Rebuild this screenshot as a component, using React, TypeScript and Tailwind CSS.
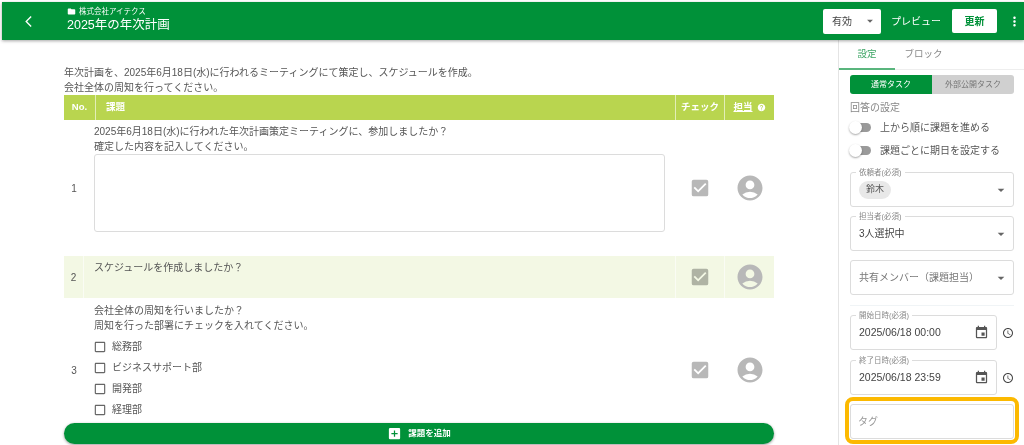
import React from 'react';
import {
  MdAccessTime,
  MdAccountCircle,
  MdAddBox,
  MdArrowDropDown,
  MdArrowBackIosNew,
  MdCheckBox,
  MdCheckBoxOutlineBlank,
  MdEvent,
  MdFolder,
  MdHelp,
  MdMoreVert,
} from 'react-icons/md';

const FONT = '"Liberation Sans", "Noto Sans CJK JP", sans-serif';

const DEPARTMENTS = ['総務部', 'ビジネスサポート部', '開発部', '経理部'];

const RowIcons = () => (
  <>
    <div className="w-[49px] flex items-center justify-center border-l border-white/60">
      <MdCheckBox className="text-[#b8b8b8] mix-blend-multiply" size={22} />
    </div>
    <div className="w-[50px] flex items-center justify-center border-l border-white/60">
      <MdAccountCircle className="text-[#b8b8b8]" size={30} />
    </div>
  </>
);

const SelectBox = ({ label, children }: { label?: string; children: React.ReactNode }) => (
  <div className="relative h-[35px] rounded-[3px] border border-[#dcdcdc] flex items-center justify-between pl-[8px] pr-[4px]">
    {label && (
      <span className="absolute left-[5px] top-[-5px] bg-white px-[3px] text-[7.5px] leading-[9px] text-[#888]">{label}</span>
    )}
    {children}
    <MdArrowDropDown className="text-[#666] shrink-0" size={16} />
  </div>
);

const DateBox = ({ label, value }: { label: string; value: string }) => (
  <div className="flex items-center gap-[5px]">
    <div className="relative w-[147px] h-[35px] rounded-[3px] border border-[#dcdcdc] flex items-center justify-between pl-[8px] pr-[7px]">
      <span className="absolute left-[5px] top-[-5px] bg-white px-[3px] text-[7.5px] leading-[9px] text-[#888]">{label}</span>
      <span className="text-[10.5px] text-[#444]">{value}</span>
      <MdEvent className="text-[#555]" size={15} />
    </div>
    <MdAccessTime className="text-[#444]" size={12} />
  </div>
);

const Toggle = ({ label }: { label: string }) => (
  <div className="flex items-center gap-[9px] h-[23px]">
    <div className="relative w-[21px] h-[9px] rounded-full bg-[#9a9a9a]">
      <div className="absolute left-[-1px] top-[-2px] w-[13px] h-[13px] rounded-full bg-white shadow-[0_1px_2px_rgba(0,0,0,0.35)]" />
    </div>
    <span className="text-[10px] text-[#555]">{label}</span>
  </div>
);

export default function App() {
  return (
    <div className="w-[1024px] h-[445px] overflow-hidden bg-white flex flex-col pt-[2px] pl-[2px]" style={{ fontFamily: FONT }}>
      <header className="h-[38px] shrink-0 bg-[#009139] flex items-center shadow-[0_1px_3px_rgba(0,0,0,0.35)] relative z-10">
        <div className="w-[65px] pl-[20px] flex items-center">
          <MdArrowBackIosNew className="text-white" size={13} />
        </div>
        <div className="flex-1 flex flex-col pb-[2px]">
          <div className="flex items-center gap-[3px] text-[7.5px] leading-[9px] text-white">
            <MdFolder size={9} />
            <span>株式会社アイテクス</span>
          </div>
          <div className="text-[12.5px] leading-[18px] text-white">2025年の年次計画</div>
        </div>
        <div className="flex items-center">
          <div className="w-[58px] h-[25px] bg-white rounded-[2px] flex items-center justify-between pl-[9px] pr-[4px] text-[10px] text-[#444]">
            <span>有効</span>
            <MdArrowDropDown className="text-[#666]" size={14} />
          </div>
          <span className="ml-[10px] text-[10px] text-white">プレビュー</span>
          <div className="ml-[11px] w-[45px] h-[24px] bg-white rounded-[2px] flex items-center justify-center text-[10px] font-bold text-[#009139]">
            更新
          </div>
          <div className="w-[27px] flex justify-end pr-[2px]">
            <MdMoreVert className="text-white" size={15} />
          </div>
        </div>
      </header>

      <div className="flex-1 flex min-h-0">
        <main className="w-[837px] pl-[62px] pr-[64px] pt-[25px] flex flex-col border-r border-[#e4e4e4]">
          <p className="text-[10px] leading-[15px] text-[#555]">
            年次計画を、2025年6月18日(水)に行われるミーティングにて策定し、スケジュールを作成。
            <br />
            会社全体の周知を行ってください。
          </p>

          <div className="h-[25px] bg-[#b9d54f] flex text-white text-[9.5px] font-bold">
            <div className="w-[31px] flex items-center justify-center">No.</div>
            <div className="flex-1 flex items-center pl-[10px] border-l border-white/60">課題</div>
            <div className="w-[49px] flex items-center justify-center border-l border-white/60">チェック</div>
            <div className="w-[50px] flex items-center justify-center gap-[4px] border-l border-white/60">
              <span className="underline">担当</span>
              <MdHelp size={9} />
            </div>
          </div>

          <div className="h-[136px] flex text-[10px] text-[#555]">
            <div className="w-[20px] flex items-center justify-center">1</div>
            <div className="flex-1 pl-[10px] pr-[10px] pt-[4px] leading-[15px]">
              <p>2025年6月18日(水)に行われた年次計画策定ミーティングに、参加しましたか？</p>
              <p>確定した内容を記入してください。</p>
              <div className="h-[78px] rounded-[3px] border border-[#dcdcdc]" />
            </div>
            <RowIcons />
          </div>

          <div className="h-[42px] flex bg-[#f3f8e4] text-[10px] text-[#555]">
            <div className="w-[20px] flex items-center justify-center border-r border-white/60">2</div>
            <div className="flex-1 pl-[10px] pt-[4px] leading-[15px]">スケジュールを作成しましたか？</div>
            <RowIcons />
          </div>

          <div className="h-[125px] flex text-[10px] text-[#555]">
            <div className="w-[20px] flex items-center justify-center pt-[19px]">3</div>
            <div className="flex-1 pl-[10px] pt-[5px]">
              <p className="leading-[15px]">
                会社全体の周知を行いましたか？
                <br />
                周知を行った部署にチェックを入れてください。
              </p>
              <div className="mt-[3px] flex flex-col">
                {DEPARTMENTS.map((name) => (
                  <div key={name} className="h-[21px] flex items-center gap-[5px]">
                    <MdCheckBoxOutlineBlank className="text-[#666] ml-[-1px]" size={14} />
                    <span>{name}</span>
                  </div>
                ))}
              </div>
            </div>
            <div className="flex pt-[18px]">
              <RowIcons />
            </div>
          </div>

          <div className="h-[21px] rounded-full bg-[#009139] shadow-[0_1px_3px_rgba(0,0,0,0.4)] flex items-center justify-center gap-[6px] text-white text-[8.5px] font-bold">
            <MdAddBox size={15} />
            <span>課題を追加</span>
          </div>
        </main>

        <aside className="flex-1 min-w-0 flex flex-col text-[#555]">
          <div className="h-[30px] flex border-b border-[#eeeeee] text-[9.5px]">
            <div className="w-[56px] flex items-center justify-center text-[#3da565] border-b-2 border-[#59b57d] h-[30px]">設定</div>
            <div className="w-[57px] flex items-center justify-center text-[#888]">ブロック</div>
          </div>
          <div className="pl-[11px] pr-[7px] pt-[5px] flex flex-col">
            <div className="w-[164px] h-[19px] rounded-[3px] overflow-hidden flex text-[8px]">
              <div className="w-[82px] bg-[#009139] text-white flex items-center justify-center">通常タスク</div>
              <div className="flex-1 bg-[#d0d0d0] text-[#777] flex items-center justify-center">外部公開タスク</div>
            </div>
            <div className="mt-[7px] mb-[1px] text-[10px] leading-[14px] text-[#888]">回答の設定</div>
            <Toggle label="上から順に課題を進める" />
            <Toggle label="課題ごとに期日を設定する" />

            <div className="mt-[10px] flex flex-col gap-[9px] w-[164px]">
              <SelectBox label="依頼者(必須)">
                <span className="h-[18px] px-[7px] rounded-full bg-[#e8e8e8] text-[9px] flex items-center">鈴木</span>
              </SelectBox>
              <SelectBox label="担当者(必須)">
                <span className="text-[10px] text-[#444]">3人選択中</span>
              </SelectBox>
              <SelectBox>
                <span className="text-[10px] text-[#777]">共有メンバー（課題担当）</span>
              </SelectBox>
            </div>

            <div className="mt-[10px] border-t border-[#f0f4f6] w-[164px]" />

            <div className="mt-[9px] flex flex-col gap-[10px]">
              <DateBox label="開始日時(必須)" value="2025/06/18 00:00" />
              <DateBox label="終了日時(必須)" value="2025/06/18 23:59" />
            </div>

            <div className="relative z-10 mt-[2px] ml-[-5px] w-[174px] h-[47px] rounded-[8px] border-[4px] border-[#fcb900] pt-[3px] pb-[1px] px-[1px]">
              <div className="h-full rounded-[3px] border border-[#dcdcdc] flex items-center pl-[7px] text-[10px] text-[#999]">タグ</div>
            </div>
          </div>
        </aside>
      </div>
    </div>
  );
}
